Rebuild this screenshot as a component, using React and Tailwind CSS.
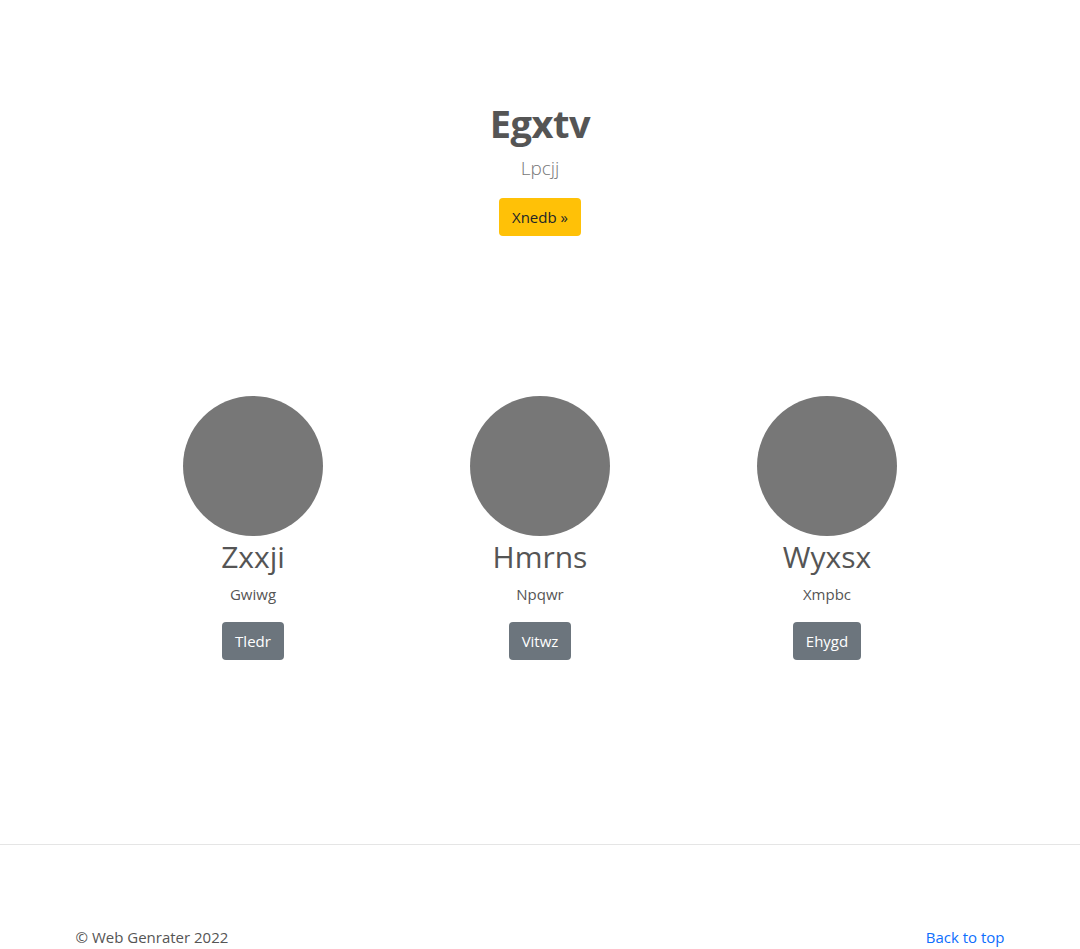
import React from 'react';

const people = [
  { name: 'Zxxji', sub: 'Gwiwg', btn: 'Tledr' },
  { name: 'Hmrns', sub: 'Npqwr', btn: 'Vitwz' },
  { name: 'Wyxsx', sub: 'Xmpbc', btn: 'Ehygd' },
];

const App = () => {
  return (
    <div className="min-h-screen bg-white text-[#555] font-['Open_Sans',sans-serif]">
      <section className="pt-[99px] flex flex-col items-center text-center">
        <h1 className="text-[38px] leading-[48px] font-bold tracking-[-0.5px]">Egxtv</h1>
        <p className="mt-[6px] text-[19px] leading-[30px] font-light text-[#777]">Lpcjj</p>
        <a href="#" className="mt-[15px] h-[38px] px-[13px] flex items-center rounded-[4px] bg-[#ffc107] text-[#212529] text-[15px]">
          Xnedb »
        </a>
      </section>

      <div className="mt-[160px] mx-auto w-[861px] grid grid-cols-3">
        {people.map(p => (
          <div key={p.name} className="flex flex-col items-center text-center">
            <div className="w-[140px] h-[140px] rounded-full bg-[#777]" />
            <h2 className="mt-[2px] text-[30px] leading-[38px] font-normal">{p.name}</h2>
            <p className="mt-[8px] text-[15px] leading-[21px]">{p.sub}</p>
            <a href="#" className="mt-[17px] h-[38px] px-[13px] flex items-center rounded-[4px] bg-[#6c757d] text-white text-[15px]">
              {p.btn}
            </a>
          </div>
        ))}
      </div>

      <hr className="mt-[184px] border-0 border-t border-[#e5e5e5]" />

      <footer className="mx-auto w-[929px] pt-[80px] pb-[13px] flex justify-between text-[15px] leading-[24px]">
        <span>© Web Genrater 2022</span>
        <a href="#" className="text-[#0d6efd]">Back to top</a>
      </footer>
    </div>
  );
};

export default App;
